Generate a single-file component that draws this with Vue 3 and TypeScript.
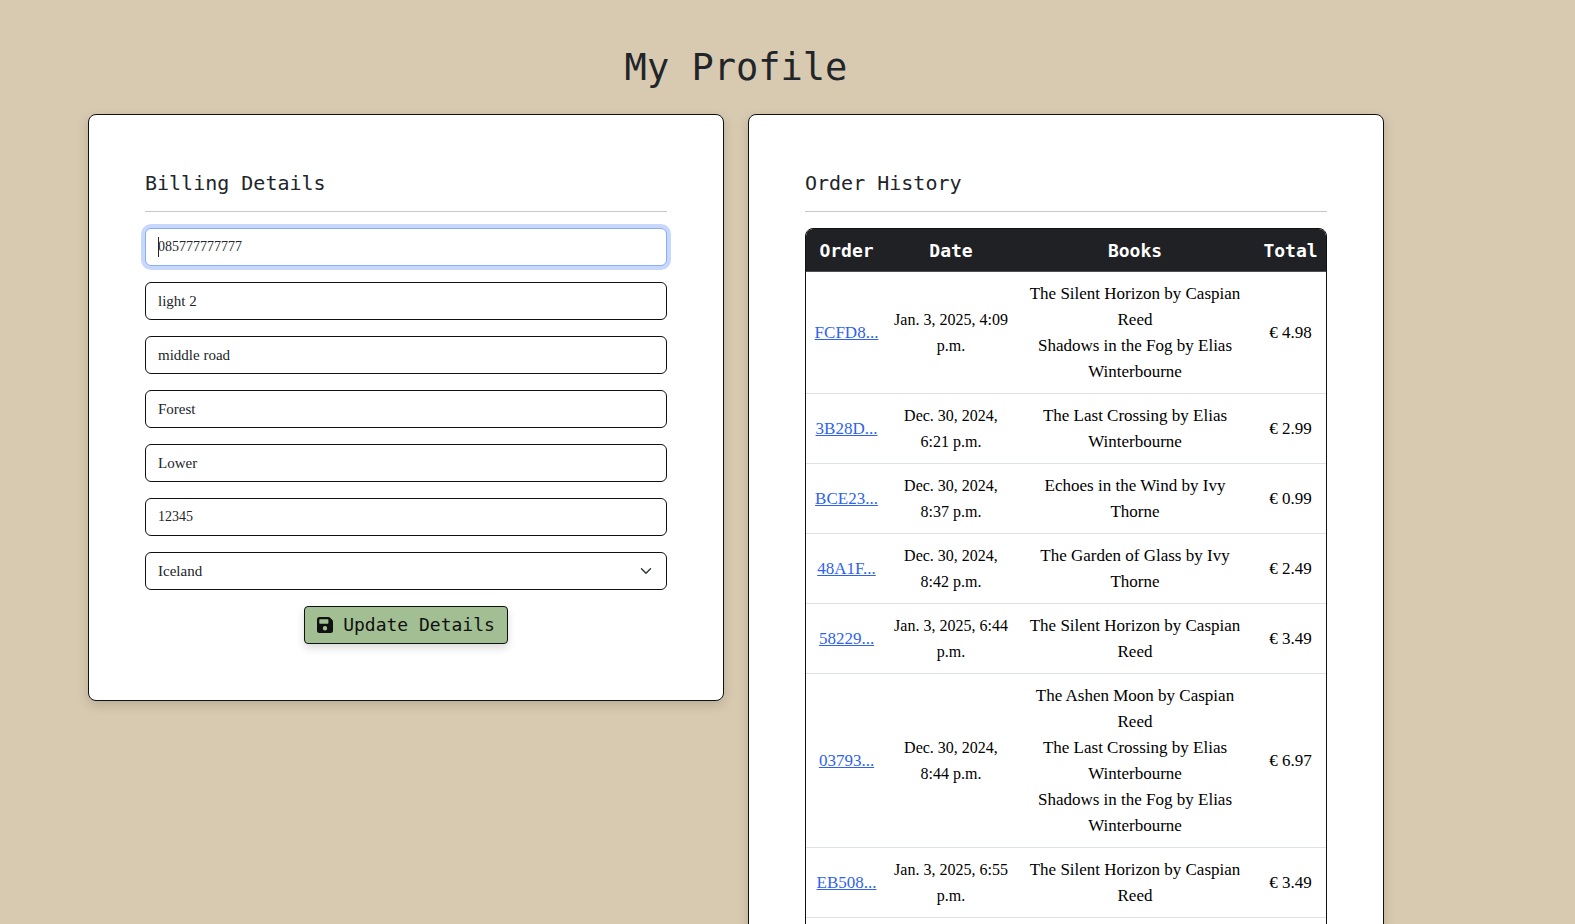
<script setup lang="ts">
import { onMounted, ref } from 'vue'

interface Field {
  id: string
  label: string
  value: string
  numeric?: boolean
}

interface Order {
  number: string
  date: string
  books: string[]
  total: string
}

const fields = ref<Field[]>([
  { id: 'phone', label: 'Phone number', value: '085777777777', numeric: true },
  { id: 'street1', label: 'Street address 1', value: 'light 2' },
  { id: 'street2', label: 'Street address 2', value: 'middle road' },
  { id: 'town', label: 'Town or city', value: 'Forest' },
  { id: 'county', label: 'County', value: 'Lower' },
  { id: 'postcode', label: 'Postal code', value: '12345', numeric: true },
])
const country = ref('Iceland')
const caretAtStart = ref(false)

const silent = 'The Silent Horizon by Caspian Reed'
const shadows = 'Shadows in the Fog by Elias Winterbourne'
const crossing = 'The Last Crossing by Elias Winterbourne'

const orders: Order[] = [
  { number: 'FCFD8...', date: 'Jan. 3, 2025, 4:09 p.m.', books: [silent, shadows], total: '€ 4.98' },
  { number: '3B28D...', date: 'Dec. 30, 2024, 6:21 p.m.', books: [crossing], total: '€ 2.99' },
  { number: 'BCE23...', date: 'Dec. 30, 2024, 8:37 p.m.', books: ['Echoes in the Wind by Ivy Thorne'], total: '€ 0.99' },
  { number: '48A1F...', date: 'Dec. 30, 2024, 8:42 p.m.', books: ['The Garden of Glass by Ivy Thorne'], total: '€ 2.49' },
  { number: '58229...', date: 'Jan. 3, 2025, 6:44 p.m.', books: [silent], total: '€ 3.49' },
  {
    number: '03793...',
    date: 'Dec. 30, 2024, 8:44 p.m.',
    books: ['The Ashen Moon by Caspian Reed', crossing, shadows],
    total: '€ 6.97',
  },
  { number: 'EB508...', date: 'Jan. 3, 2025, 6:55 p.m.', books: [silent], total: '€ 3.49' },
  { number: '7A2C4...', date: 'Jan. 3, 2025, 7:02 p.m.', books: [silent], total: '€ 3.49' },
]

onMounted(() => {
  const phone = document.getElementById('phone') as HTMLInputElement | null
  phone?.focus({ preventScroll: true })
  phone?.setSelectionRange(0, 0)
  caretAtStart.value = true
})

function releaseCaret() {
  caretAtStart.value = false
}
</script>

<template>
  <main class="page">
    <h1 class="title">My Profile</h1>
    <div class="columns">
      <section class="card">
        <h2 class="heading">Billing Details</h2>
        <hr class="rule" />
        <form class="form" @submit.prevent>
          <div v-for="field in fields" :key="field.id" class="field">
            <input
              :id="field.id"
              v-model="field.value"
              class="control"
              :class="{ numeric: field.numeric, steady: caretAtStart }"
              type="text"
              :aria-label="field.label"
              @keydown="releaseCaret"
              @mousedown="releaseCaret"
              @blur="releaseCaret"
            />
            <span v-if="field.id === 'phone' && caretAtStart" class="caret" aria-hidden="true"></span>
          </div>
          <select id="country" v-model="country" class="control select" aria-label="Country">
            <option>Iceland</option>
          </select>
          <button class="update" type="submit">
            <svg class="save" viewBox="0 0 16 16" aria-hidden="true">
              <path
                fill="currentColor"
                fill-rule="evenodd"
                d="M2.3 0h9.2c.6 0 1 .2 1.4.6l2.500 2.500c.4.4.6.9.6 1.400v9.200c0 1.300-1 2.300-2.300 2.300H2.300C1 16 0 15 0 13.700V2.300C0 1 1 0 2.300 0zM3 2.300c-.4 0-.7.3-.7.7v3c0 .4.3.7.7.7h7.700c.4 0 .7-.3.7-.7V3c0-.4-.3-.7-.7-.7zM8 9a2.200 2.200 0 1 0 0 4.400A2.200 2.200 0 0 0 8 9z"
              />
            </svg>
            <span>Update Details</span>
          </button>
        </form>
      </section>

      <section class="card">
        <h2 class="heading">Order History</h2>
        <hr class="rule" />
        <div class="table-frame">
          <table class="orders">
            <thead>
              <tr>
                <th class="col-order" scope="col">Order</th>
                <th class="col-date" scope="col">Date</th>
                <th scope="col">Books</th>
                <th class="col-total" scope="col">Total</th>
              </tr>
            </thead>
            <tbody>
              <tr v-for="order in orders" :key="order.number">
                <td><a class="link" href="#">{{ order.number }}</a></td>
                <td class="date">{{ order.date }}</td>
                <td>
                  <ul class="books">
                    <li v-for="book in order.books" :key="book">{{ book }}</li>
                  </ul>
                </td>
                <td>{{ order.total }}</td>
              </tr>
            </tbody>
          </table>
        </div>
      </section>
    </div>
  </main>
</template>

<style>
body {
  background: #d8cab0;
}
</style>

<style scoped>
.page {
  box-sizing: border-box;
  max-width: 1472px;
  padding: 44px 88px 0;
  color: #212529;
  font-family: "Liberation Serif", serif;
}
.title,
.heading,
.orders th,
.update {
  font-family: "DejaVu Sans Mono", "Liberation Mono", monospace;
}
.title {
  margin: 0 0 22px;
  font-size: 37px;
  font-weight: 400;
  line-height: 48px;
  text-align: center;
}
.columns {
  display: grid;
  grid-template-columns: minmax(0, 1fr) minmax(0, 1fr);
  gap: 24px;
  align-items: start;
}
.card {
  padding: 56px;
  border: 1px solid #111;
  border-radius: 8px;
  background: #fff;
  box-shadow: 0 4px 12px rgba(0, 0, 0, 0.15);
}
.heading {
  margin: 0;
  font-size: 20px;
  font-weight: 400;
  line-height: 24px;
}
.rule {
  height: 1px;
  margin: 16px 0;
  border: 0;
  background: #c7c8c9;
}
.form {
  display: flex;
  flex-direction: column;
  gap: 16px;
}
.field {
  position: relative;
  display: flex;
}
.caret {
  position: absolute;
  top: 9px;
  left: 13px;
  width: 1px;
  height: 20px;
  background: #212529;
  pointer-events: none;
}
.control {
  box-sizing: border-box;
  width: 100%;
  height: 38px;
  padding: 6px 12px;
  border: 1px solid #111;
  border-radius: 6px;
  outline: 0;
  background-color: #fff;
  color: #212529;
  font-family: inherit;
  font-size: 15px;
  line-height: 24px;
}
.numeric {
  font-size: 14px;
}
.steady {
  caret-color: transparent;
}
.control:focus {
  border-color: #86acfa;
  box-shadow: 0 0 0 4px #c8d8fc;
}
.select {
  appearance: none;
  background-image: url("data:image/svg+xml,%3Csvg xmlns='http://www.w3.org/2000/svg' viewBox='0 0 16 16'%3E%3Cpath fill='none' stroke='%23343a40' stroke-linecap='round' stroke-linejoin='round' stroke-width='2' d='m2 5 6 6 6-6'/%3E%3C/svg%3E");
  background-position: right 12px center;
  background-repeat: no-repeat;
  background-size: 16px 12px;
}
.update {
  display: flex;
  align-items: center;
  align-self: center;
  gap: 10px;
  height: 38px;
  padding: 0 12px;
  border: 1px solid #111;
  border-radius: 4px;
  background: #a1bf92;
  box-shadow: 0 4px 8px rgba(0, 0, 0, 0.15);
  color: #111;
  font-size: 18px;
  line-height: 24px;
}
.save {
  width: 16px;
  height: 16px;
}
.table-frame {
  overflow: hidden;
  border: 1px solid #111;
  border-radius: 8px 8px 0 0;
}
.orders {
  width: 100%;
  border-collapse: separate;
  border-spacing: 0;
  table-layout: fixed;
  color: #000;
  font-size: 17px;
  line-height: 26px;
  text-align: center;
}
.orders th {
  padding: 9px 0 7px;
  border-bottom: 1px solid #4d5154;
  background: #202124;
  color: #fff;
  font-size: 18px;
}
.orders td {
  padding: 9px 6px 8px;
  border-bottom: 1px solid #dee2e6;
  vertical-align: middle;
}
.col-order {
  width: 81px;
}
.col-date {
  width: 128px;
}
.col-total {
  width: 71px;
}
.orders .date {
  font-size: 16px;
}
.link {
  color: #2f63ee;
}
.books {
  margin: 0;
  padding: 0;
  list-style: none;
}
</style>
